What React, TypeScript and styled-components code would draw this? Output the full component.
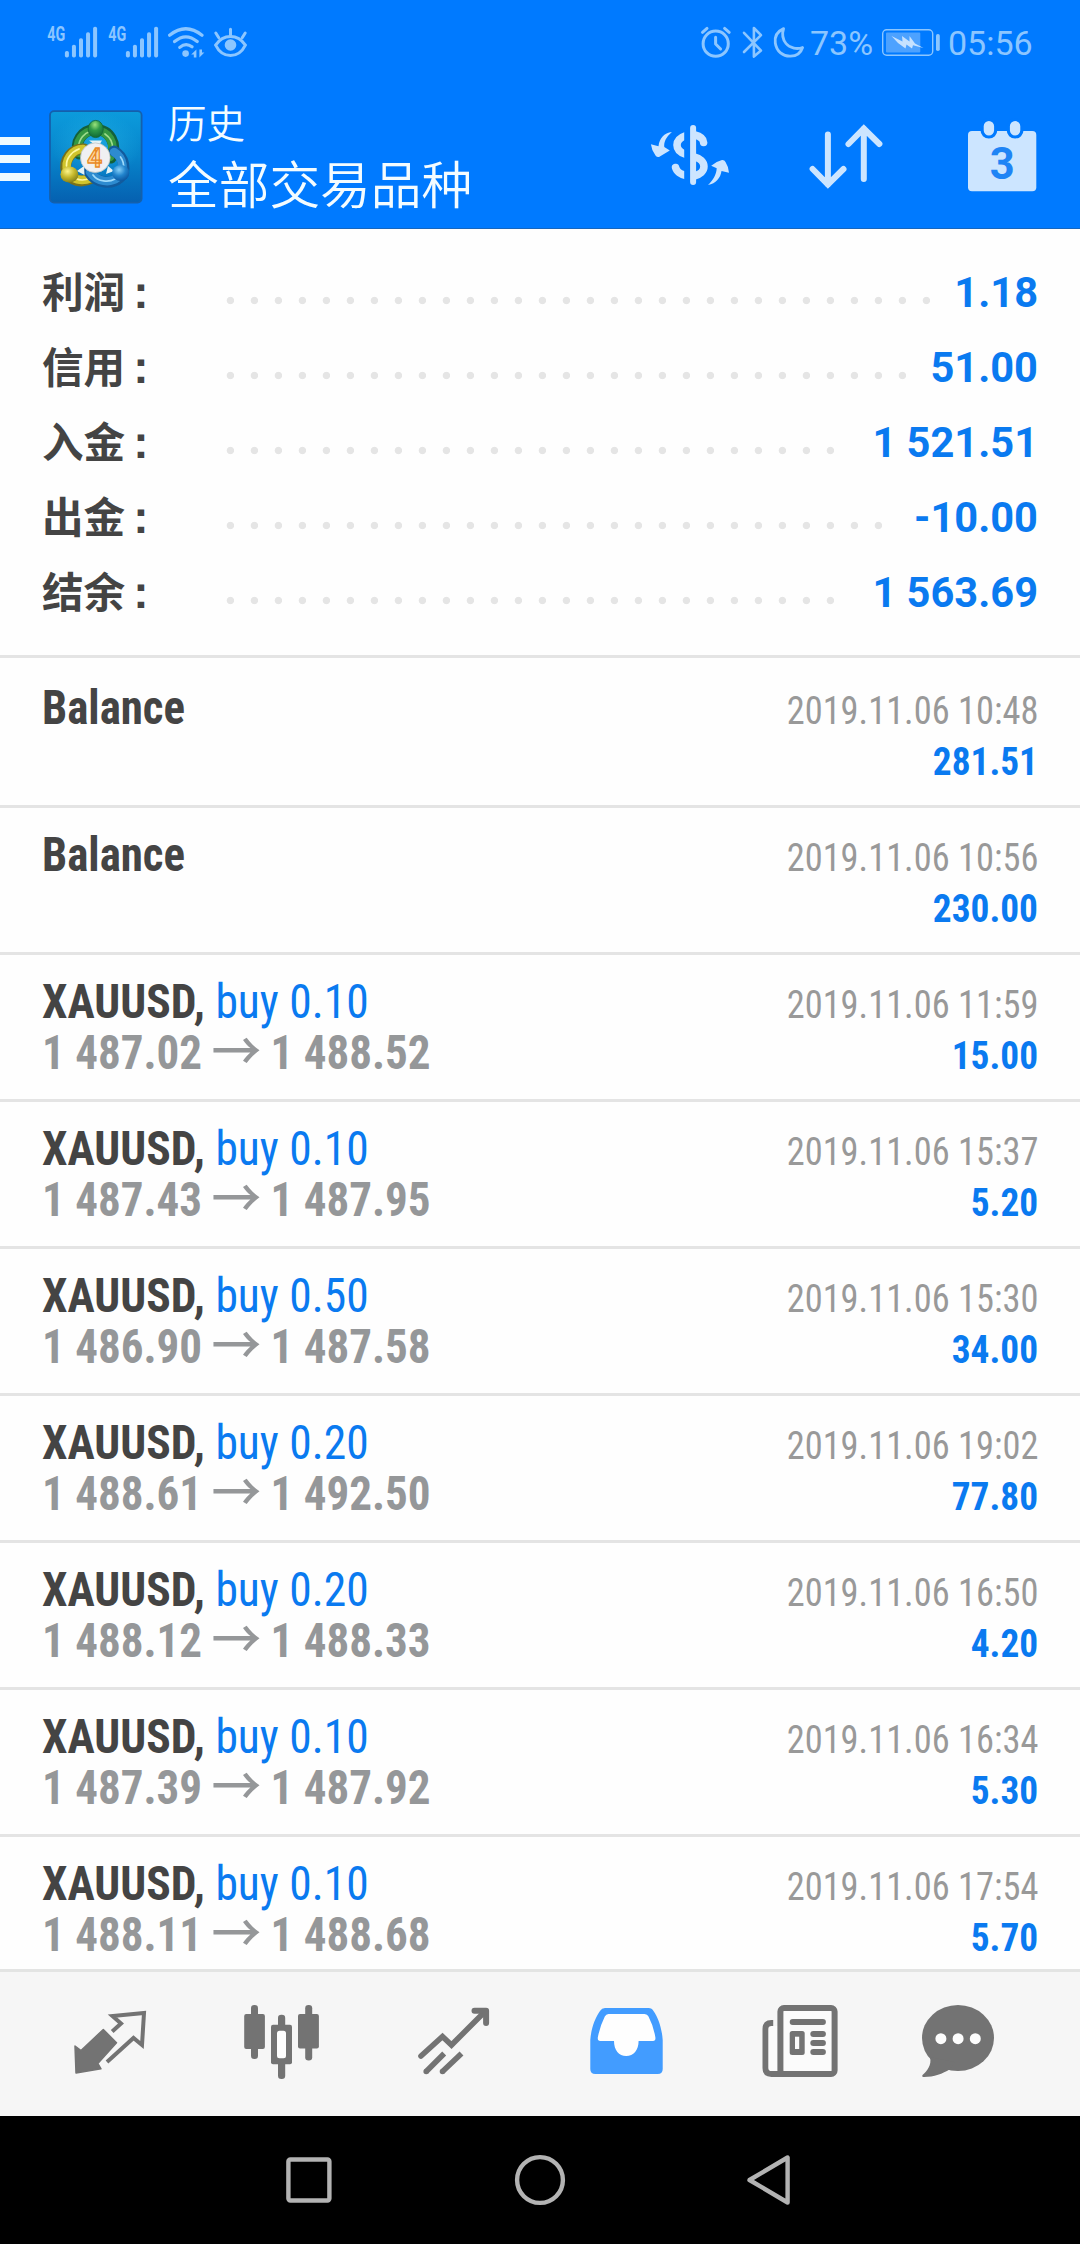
import React from "react";
import styled, { createGlobalStyle } from "styled-components";

const Global = createGlobalStyle`
  * { box-sizing: border-box; }
  body { margin: 0; background: #000; }
`;

const cond = `"Roboto Condensed", Roboto, "Noto Sans CJK SC", sans-serif`;
const sans = `Roboto, "Noto Sans CJK SC", sans-serif`;
const STATUS = "#8cc6ff";
const TOOL = "#cce5ff";
const BLUE = "#0a7af0";
const GREY = "#737373";

const Screen = styled.div`
  width: 1080px;
  height: 2244px;
  display: flex;
  flex-direction: column;
  background: #fefefe;
  font-family: ${sans};
  overflow: hidden;
`;
const Header = styled.header`
  flex: none;
  height: 229px;
  background: #007aff;
  border-bottom: 1px solid #1766bd;
  display: flex;
  flex-direction: column;
`;
const StatusBar = styled.div`
  height: 84px;
  padding: 20px 46px 0 46px;
  display: flex;
  justify-content: space-between;
`;
const StatusGroup = styled.div`
  display: flex;
  height: 44px;
`;
const StatusText = styled.span<{ $w: number }>`
  width: ${(p) => p.$w}px;
  font-size: 34px;
  line-height: 47px;
  color: ${STATUS};
  white-space: nowrap;
`;
const Toolbar = styled.div`
  height: 144px;
  display: flex;
`;
const Art = styled.svg`
  display: block;
  flex: none;
`;
const Titles = styled.div`
  flex: 1;
  padding: 13px 0 0 16px;
  color: #f4fcff;
  font-family: "Noto Sans CJK SC", sans-serif;
  font-weight: 350;
  white-space: nowrap;
`;
const Section = styled.div`
  font-size: 38.6px;
  line-height: 49px;
`;
const Symbols = styled.div`
  font-size: 50.7px;
  line-height: 72px;
`;
const Summary = styled.section`
  flex: none;
  height: 429px;
  padding: 27px 42px 0;
  border-bottom: 3px solid #e4e4e4;
`;
const SumRow = styled.div`
  display: flex;
  height: 75px;
  line-height: 75px;
  font-size: 41.6px;
  font-weight: 700;
`;
const SumLabel = styled.span`
  width: 176px;
  color: #444;
  white-space: pre;
`;
const Colon = styled.span`
  margin-left: 8px;
  font-family: "Liberation Sans", sans-serif;
  font-size: 46px;
  line-height: 0;
`;
const Leader = styled.span`
  flex: 1;
  height: 74px;
  display: flex;
  flex-wrap: wrap;
  overflow: hidden;
  margin-right: 10px;
`;
const Dot = styled.i`
  width: 24px;
  height: 74px;
  background: radial-gradient(circle at 12.4px 44.5px, #e5e5e5 3.3px, transparent 4.1px);
`;
const SumValue = styled.span`
  color: ${BLUE};
  line-height: 73px;
  white-space: nowrap;
`;
const List = styled.main`
  flex: 1;
  min-height: 0;
  overflow: hidden;
`;
const Row = styled.article<{ $first?: boolean }>`
  height: ${(p) => (p.$first ? 150 : 147)}px;
  padding: ${(p) => (p.$first ? 24 : 21)}px 42px 0;
  border-bottom: 3px solid #e4e4e4;
  font-family: ${cond};
`;
const Line = styled.div`
  height: 51px;
  line-height: 51px;
  font-size: 48px;
  display: flex;
  justify-content: space-between;
  align-items: baseline;
  white-space: pre;
`;
const Deal = styled.span<{ $fit: number }>`
  transform: scaleX(${(p) => p.$fit});
  transform-origin: left;
`;
const Name = styled.span`
  font-weight: 700;
  color: #444;
`;
const Side = styled.span`
  font-weight: 400;
  color: ${BLUE};
`;
const Prices = styled.span`
  font-weight: 700;
  color: #959799;
  transform: scaleX(0.938);
  transform-origin: left;
  &::before {
    content: "\\200b";
  }
`;
const Arrow = styled.span`
  font-family: "Noto Sans CJK SC", sans-serif;
  font-weight: 500;
  font-size: 53px;
  line-height: 0;
  vertical-align: -2px;
  margin: 0 -1px;
`;
const Stamp = styled.span`
  font-size: 39.4px;
  color: #999;
  transform: scaleX(0.924);
  transform-origin: right;
`;
const Amount = styled.span`
  font-size: 39.4px;
  font-weight: 700;
  color: ${BLUE};
  transform: scaleX(0.948);
  transform-origin: right;
`;
const Tabs = styled.nav`
  flex: none;
  height: 147px;
  border-top: 3px solid #e3e4e3;
  background: #f6f6f6;
  padding-left: 24px;
  display: grid;
  grid-template-columns: repeat(5, 172px) 148px;
`;
const SystemBar = styled.footer`
  flex: none;
  height: 128px;
  background: #000;
  padding-left: 279px;
  display: flex;
  gap: 171px;
`;

type Box = [number, number, number, number];
const Glyph = ({ box, children }: { box: Box; children: React.ReactNode }) => (
  <Art width={box[2]} height={box[3]} viewBox={box.join(" ")} fill="none">
    {children}
  </Art>
);

const Signal = ({ x }: { x: number }) => (
  <Glyph box={[x, 20, 61, 44]}>
    <text x={x + 1.2} y="40.8" fontFamily="Roboto" fontWeight="700" fontSize="19.8" textLength="18" lengthAdjust="spacingAndGlyphs" fill={STATUS}>4G</text>
    {[51, 44.7, 38.3, 32.3, 26.7].map((t, i) => (
      <rect key={t} x={x + 18.9 + i * 7.05} y={t} width="4" height={57.5 - t} rx="1.8" fill={STATUS} />
    ))}
  </Glyph>
);

const Wifi = () => (
  <Glyph box={[168, 20, 44, 44]}>
    <g stroke={STATUS} strokeWidth="3.2" strokeLinecap="round">
      <path d="M169.6 35.2Q185.8 22.3 202 35.2M174.6 41.6Q185.8 32.2 197.2 41.6M179.8 47.4Q185.8 42.2 192 46.8" />
    </g>
    <circle cx="185.6" cy="53.6" r="3.3" fill={STATUS} />
    <path d="M196.4 49.5V57.5H193.8V54.5H191.2ZM199.4 49.5V57.5L204.4 52.6H202V49.5Z" fill={STATUS} />
  </Glyph>
);

const Eye = () => (
  <Glyph box={[212, 20, 38, 44]}>
    <g stroke={STATUS} strokeWidth="3" strokeLinecap="round">
      <path d="M215.6 45.2C219.5 39.4 224.5 36.6 230.5 36.6S241.5 39.4 245.4 45.2C242 52 236.5 55.6 230.5 55.6S219 52 215.6 45.2Z" />
      <path d="M230.5 29.2V36M215.8 33L218.8 37.7M245.2 33L242.2 37.7" />
    </g>
    <circle cx="230.5" cy="45" r="5.8" fill={STATUS} />
  </Glyph>
);

const StatusIcons = () => (
  <Glyph box={[700, 20, 110, 44]}>
    <g stroke={STATUS} strokeWidth="3" strokeLinecap="round" strokeLinejoin="round">
      <circle cx="715.7" cy="43.7" r="12.6" />
      <path d="M715.6 37.2V44L720.6 49M702.5 32.3L707 28.4M724.6 28.4L729.2 32.3" />
      <path d="M744 32.8L761 50.6L753.9 56.6V28L761 35.2L744 52" strokeWidth="2.6" />
      <path d="M783.6 28.6C777 31.5 774.5 37 775.3 43C776.5 51.5 783 56.5 790.5 56.2C796.5 56 801 52.5 802.6 47.5C797.5 49.5 790 48.5 786 43.5C782.5 39 782 33.5 783.6 28.6Z" strokeWidth="2.8" />
    </g>
  </Glyph>
);

const Battery = () => (
  <Glyph box={[878, 20, 70, 44]}>
    <rect x="882.7" y="29.7" width="50" height="25.6" rx="4" stroke={STATUS} strokeWidth="1.4" />
    <rect x="886" y="32.5" width="34.3" height="20" rx="1" fill="#4da2ff" />
    <rect x="936" y="34" width="3.8" height="17" rx="1.8" fill={STATUS} />
    <path d="M891.5 36L902.5 41.5L902 36L909.5 41.5L909.5 36L915 43.5L923.5 48L913 45.2L912 48.5L906.5 44.5L905.5 48.5L898 43Z" fill="#c6e2ff" />
  </Glyph>
);

const MenuLogo = () => (
  <Glyph box={[0, 84, 152, 144]}>
    <defs>
      <linearGradient id="tile" x1="0" y1="0" x2="0" y2="1">
        <stop offset="0" stopColor="#0c9bdc" />
        <stop offset="0.5" stopColor="#0784cb" />
        <stop offset="1" stopColor="#0560b0" />
      </linearGradient>
      <radialGradient id="glow">
        <stop offset="0" stopColor="#25b6e8" stopOpacity="0.6" />
        <stop offset="1" stopColor="#25b6e8" stopOpacity="0" />
      </radialGradient>
      <radialGradient id="gh" cx="0.45" cy="0.25" r="0.75">
        <stop offset="0" stopColor="#9be27c" />
        <stop offset="0.45" stopColor="#2f9a48" />
        <stop offset="1" stopColor="#0f6a35" />
      </radialGradient>
      <radialGradient id="yh" cx="0.4" cy="0.3" r="0.75">
        <stop offset="0" stopColor="#fdf58a" />
        <stop offset="0.5" stopColor="#c6b92d" />
        <stop offset="1" stopColor="#7d7a18" />
      </radialGradient>
      <radialGradient id="bh" cx="0.4" cy="0.3" r="0.75">
        <stop offset="0" stopColor="#86d0f8" />
        <stop offset="0.5" stopColor="#2184cd" />
        <stop offset="1" stopColor="#0a529c" />
      </radialGradient>
    </defs>
    <path d="M0 137H30V145H0ZM0 155H30V163H0ZM0 173H30V181H0Z" fill="#ecfaff" />
    <rect x="50" y="111.2" width="91.6" height="91.4" rx="4" fill="url(#tile)" stroke="#1460ac" strokeWidth="1.8" />
    <ellipse cx="96" cy="146" rx="44" ry="34" fill="url(#glow)" />
    <g strokeLinecap="round">
      <path d="M79 154C74 142 82 130 95 129.5C110 129.5 118 144 111 158" stroke="#14603a" strokeWidth="11" />
      <path d="M79 153C75 142 83 131 95 130.5C109 130.5 116.5 144 110 157" stroke="#359842" strokeWidth="8.5" />
      <path d="M78.5 147C79 138 85 133 90 131.5M105 134C111 138 113 143 112.5 149" stroke="#9fdc8c" strokeWidth="1.7" />
      <path d="M84 149C72 148 63 161 66.5 171C70 181 82 183.5 92 178" stroke="#79711a" strokeWidth="11" />
      <path d="M83 149C72 149 64 161 67.5 171C71 180 82 182 91 178" stroke="#d0c42c" strokeWidth="8.5" />
      <path d="M79 149C71 152 66 159 66.5 166M76 178.5C81 181 87 179.5 90 178" stroke="#fff8a1" strokeWidth="1.7" />
      <path d="M89 172C96 183 111 185.5 119.5 178C127 171 125 157 114 151" stroke="#125b9d" strokeWidth="11" />
      <path d="M90 172C97 182 110 184 118.5 177C125 171 124 158 114 152" stroke="#2d8bd0" strokeWidth="8.5" />
      <path d="M93 175C98 182 109 182.5 115 179M120.5 157C123.5 161 124 165 123.5 169" stroke="#9fdbfb" strokeWidth="1.7" />
      <path d="M89 140.500H102L98 147ZM77 171L84 166L84.500 175ZM108 166L114 171L106 174Z" fill="#e4f3f6" />
    </g>
    <ellipse cx="95.7" cy="129" rx="7.6" ry="8.6" fill="url(#gh)" stroke="#136634" strokeWidth="0.8" />
    <ellipse cx="69.4" cy="174.5" rx="9" ry="8" fill="url(#yh)" />
    <ellipse cx="120.7" cy="173" rx="8.6" ry="8" fill="url(#bh)" />
    <circle cx="95.3" cy="157.7" r="14.8" fill="#f0f0f2" stroke="#bfc5c3" strokeWidth="0.8" />
    <text x="94.8" y="166.5" textAnchor="middle" fontFamily="Roboto" fontWeight="700" fontSize="26" fill="#ffd9a0" stroke="#e98a26" strokeWidth="1.3">4</text>
  </Glyph>
);

const Currency = () => (
  <Glyph box={[650, 84, 142, 144]}>
    <clipPath id="dl"><rect x="650" y="120" width="34.2" height="70" /></clipPath>
    <clipPath id="dr"><rect x="695" y="120" width="40" height="70" /></clipPath>
    <g stroke={TOOL} strokeWidth="7.6" strokeLinecap="round">
      <g clipPath="url(#dl)">
        <path d="M686 135.5C674 139.5 674 150.5 686 154.5M675.6 167.5C676.5 171.5 681 174.5 686 175.5" />
      </g>
      <g clipPath="url(#dr)">
        <path d="M693 134.5C700 136 703.5 139 703.6 142.5M693 156.6C707.6 159.6 707.6 173.5 693 176.2" />
      </g>
    </g>
    <path d="M693.1 128V182" stroke={TOOL} strokeWidth="6" strokeLinecap="round" />
    <g fill={TOOL}>
      <path d="M671.9 132C666 137 663.7 142 664.3 147L669.8 150.5L659 157Q657 157.5 655.5 155.5Q651.5 150 650.9 144.3L658.5 146.3C659.5 138 664 133 671.9 132Z" />
      <path d="M708 185C713 180.5 716.5 174.5 716.7 168.3L711.2 165.7Q716 161.5 722 160Q724.5 159.8 725.5 162Q728.7 167 729 172.8L721.5 171C720.5 178 716 183.5 708 185Z" />
    </g>
  </Glyph>
);

const Sort = () => (
  <Glyph box={[792, 84, 146, 144]}>
    <path d="M827.9 134.5V184.5M812.6 169L827.9 184.5L843.5 169M863.8 179V128.5M848.5 144L863.8 128.5L879.4 144" stroke={TOOL} strokeWidth="6" strokeLinecap="round" />
  </Glyph>
);

const Calendar = () => (
  <Glyph box={[938, 84, 142, 144]}>
    <rect x="968" y="131" width="68.3" height="60.3" rx="4" fill={TOOL} />
    <rect x="982.1" y="119.5" width="13.6" height="17.5" rx="6.8" fill={TOOL} stroke="#007aff" strokeWidth="3.2" />
    <rect x="1008.3" y="119.5" width="13.6" height="17.5" rx="6.8" fill={TOOL} stroke="#007aff" strokeWidth="3.2" />
    <text x="1002.2" y="179" textAnchor="middle" fontFamily="Roboto" fontWeight="700" fontSize="43.5" fill="#1f84f5">3</text>
  </Glyph>
);

const tabBox = (i: number): Box => [24 + i * 172, 1972, i === 5 ? 148 : 172, 144];

const TabIcons = () => (
  <Tabs>
    <Glyph box={tabBox(0)}>
      <path d="M75 2046L81 2050.5L103.3 2029.5L116.5 2042.7L97.8 2063.5L101 2068.8L76 2073Z" fill={GREY} stroke={GREY} strokeWidth="1.5" strokeLinejoin="round" />
      <path d="M112.2 2031.5L121 2023.5L112.5 2016L144 2013L142 2045L133.5 2038L107 2062" stroke={GREY} strokeWidth="4" />
    </Glyph>
    <Glyph box={tabBox(1)}>
      <g fill={GREY}>
        <rect x="244.2" y="2014" width="20.7" height="35" rx="2" />
        <rect x="251" y="2005" width="7" height="54" rx="3.3" />
        <rect x="298" y="2014" width="20.9" height="34.5" rx="2" />
        <rect x="305.2" y="2005" width="7" height="55.5" rx="3.3" />
        <rect x="271" y="2024.7" width="21" height="39.5" rx="2" />
        <rect x="278" y="2014.7" width="7.2" height="64.3" rx="3.3" />
      </g>
      <rect x="277" y="2030.7" width="9" height="27.5" rx="2.5" fill="#fdfdfd" />
    </Glyph>
    <Glyph box={tabBox(2)}>
      <g stroke={GREY} strokeWidth="5.6">
        <path d="M421 2056L442.5 2036.5L451.5 2045L485.5 2011" strokeLinecap="round" />
        <path d="M474.5 2010.8H486.1V2023" strokeLinecap="round" strokeLinejoin="round" strokeWidth="6" />
        <path d="M444.2 2053.5L426.2 2071.5M461.5 2053.5L442.5 2071.5" />
        <path d="M426.2 2071.5h0.01M442.5 2071.5h0.01" strokeLinecap="round" />
      </g>
    </Glyph>
    <Glyph box={tabBox(3)}>
      <path d="M590.3 2040C591 2029 595 2018 600 2011Q601.8 2008 605 2008H648.5Q652 2008 653.5 2011C658.5 2018 662 2029 662.7 2040V2069Q662.7 2074 657.7 2074H595.3Q590.3 2074 590.3 2069Z" fill="#429cff" />
      <path d="M608.5 2014H644.5Q647.5 2014 648.5 2016.5Q653.5 2026 655.4 2037.5Q655.8 2041 653 2041H638.6C638.6 2050 633.5 2056 626.2 2056S614 2050 614 2041H600.2Q597.4 2041 597.8 2037.5Q600 2026 604.8 2016.5Q606 2014 608.5 2014Z" fill="#fefefe" />
    </Glyph>
    <Glyph box={tabBox(4)}>
      <path d="M773 2023H772Q765.4 2023 765.4 2029V2068Q765.4 2074 771.5 2074H780V2026H773Z" fill="#fbfbfb" />
      <path d="M773.2 2023H771.5Q765.4 2023 765.4 2029V2068Q765.4 2074 771.5 2074H784" stroke={GREY} strokeWidth="5.8" />
      <rect x="780.4" y="2008" width="54.2" height="66" rx="3.5" fill="#fbfbfb" stroke={GREY} strokeWidth="6" />
      <g fill={GREY}>
        <rect x="789.7" y="2019" width="36.2" height="6" rx="3" />
        <rect x="810.3" y="2031" width="15.6" height="6" rx="3" />
        <rect x="810.3" y="2040" width="15.6" height="6" rx="3" />
        <rect x="810.3" y="2049" width="15.6" height="6" rx="3" />
        <rect x="789.7" y="2031" width="15" height="24" rx="2.5" />
      </g>
      <rect x="795" y="2036.7" width="4.2" height="12.3" fill="#fbfbfb" />
    </Glyph>
    <Glyph box={tabBox(5)}>
      <ellipse cx="958" cy="2038" rx="36" ry="33" fill={GREY} />
      <path d="M930 2057C932 2065 927 2071 922.5 2075Q921.5 2077 924 2077C934 2077 943 2073.5 949.5 2069.5L955 2062Z" fill={GREY} />
      <g fill="#fdfdfd">
        <circle cx="940.9" cy="2038.7" r="5.5" />
        <circle cx="958.1" cy="2038.7" r="5.5" />
        <circle cx="975.3" cy="2038.7" r="5.5" />
      </g>
    </Glyph>
  </Tabs>
);

const totals = [
  ["利润", "1.18"],
  ["信用", "51.00"],
  ["入金", "1 521.51"],
  ["出金", "-10.00"],
  ["结余", "1 563.69"],
];

interface HistoryItem {
  time: string;
  amount: string;
  lots?: string;
  open?: string;
  close?: string;
}
const history: HistoryItem[] = [
  { time: "10:48", amount: "281.51" },
  { time: "10:56", amount: "230.00" },
  { time: "11:59", amount: "15.00", lots: "0.10", open: "1 487.02", close: "1 488.52" },
  { time: "15:37", amount: "5.20", lots: "0.10", open: "1 487.43", close: "1 487.95" },
  { time: "15:30", amount: "34.00", lots: "0.50", open: "1 486.90", close: "1 487.58" },
  { time: "19:02", amount: "77.80", lots: "0.20", open: "1 488.61", close: "1 492.50" },
  { time: "16:50", amount: "4.20", lots: "0.20", open: "1 488.12", close: "1 488.33" },
  { time: "16:34", amount: "5.30", lots: "0.10", open: "1 487.39", close: "1 487.92" },
  { time: "17:54", amount: "5.70", lots: "0.10", open: "1 488.11", close: "1 488.68" },
];

export default function App() {
  return (
    <Screen>
      <Global />
      <Header>
        <StatusBar>
          <StatusGroup>
            <Signal x={46} />
            <Signal x={107} />
            <Wifi />
            <Eye />
          </StatusGroup>
          <StatusGroup>
            <StatusIcons />
            <StatusText $w={68}>73%</StatusText>
            <Battery />
            <StatusText $w={86}>05:56</StatusText>
          </StatusGroup>
        </StatusBar>
        <Toolbar>
          <MenuLogo />
          <Titles>
            <Section>历史</Section>
            <Symbols>全部交易品种</Symbols>
          </Titles>
          <Currency />
          <Sort />
          <Calendar />
        </Toolbar>
      </Header>
      <Summary>
        {totals.map(([label, value]) => (
          <SumRow key={label}>
            <SumLabel>
              {label}
              <Colon>:</Colon>
            </SumLabel>
            <Leader>
              {Array.from({ length: 31 }, (_, i) => (
                <Dot key={i} />
              ))}
            </Leader>
            <SumValue>{value}</SumValue>
          </SumRow>
        ))}
      </Summary>
      <List>
        {history.map((d, i) => (
          <Row key={d.time} $first={i === 0}>
            <Line>
              {d.lots ? (
                <Deal $fit={0.948}>
                  <Name>XAUUSD, </Name>
                  <Side>buy {d.lots}</Side>
                </Deal>
              ) : (
                <Deal $fit={0.935}>
                  <Name>Balance</Name>
                </Deal>
              )}
              <Stamp>2019.11.06 {d.time}</Stamp>
            </Line>
            <Line>
              <Prices>
                {d.open && (
                  <>
                    {d.open} <Arrow>→</Arrow> {d.close}
                  </>
                )}
              </Prices>
              <Amount>{d.amount}</Amount>
            </Line>
          </Row>
        ))}
      </List>
      <TabIcons />
      <SystemBar>
        <Glyph box={[279, 2116, 60, 128]}>
          <rect x="288.4" y="2159.5" width="41" height="41" rx="2" stroke="#b3b3b3" strokeWidth="4.4" />
        </Glyph>
        <Glyph box={[510, 2116, 60, 128]}>
          <circle cx="540" cy="2180" r="22.9" stroke="#b3b3b3" strokeWidth="4.4" />
        </Glyph>
        <Glyph box={[741, 2116, 60, 128]}>
          <path d="M749.5 2180L787.6 2157.5V2202.5Z" stroke="#b3b3b3" strokeWidth="4.4" strokeLinejoin="round" />
        </Glyph>
      </SystemBar>
    </Screen>
  );
}
